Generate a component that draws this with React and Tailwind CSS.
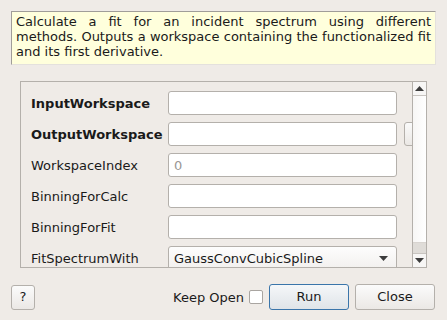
import { useState } from 'react'

const ROWS = [
  { label: 'InputWorkspace', bold: true, value: '' },
  { label: 'OutputWorkspace', bold: true, value: '', browse: true },
  { label: 'WorkspaceIndex', value: '0' },
  { label: 'BinningForCalc', value: '' },
  { label: 'BinningForFit', value: '' },
]

function Field({ row }) {
  return (
    <div className="flex items-center h-[24px]">
      <div className={`w-[137px] shrink-0 pt-[2px] ${row.bold ? 'font-bold' : ''}`}>{row.label}</div>
      <input
        readOnly
        placeholder={row.value}
        className="w-[229px] shrink-0 h-[24px] bg-white border border-[#b4b0ab] rounded-[3px] px-[5px] text-[13px] placeholder:text-[#9a9794] outline-none"
      />
      {row.browse && (
        <div className="ml-[7px] w-[20px] shrink-0 h-[24px] border border-[#b4b0ab] rounded-[3px] bg-gradient-to-b from-[#fafafa] to-[#ebe8e5]" />
      )}
    </div>
  )
}

function Arrow({ down }) {
  return (
    <svg width="9" height="5" viewBox="0 0 9 5">
      <path d={down ? 'M0 0h9L4.5 5z' : 'M0 5h9L4.5 0z'} fill="#3c3c3c" />
    </svg>
  )
}

export default function App() {
  const [keepOpen, setKeepOpen] = useState(false)

  return (
    <div className="w-[447px] h-[320px] bg-[#efebe7] text-[13px] text-[#1a1a1a] overflow-hidden" style={{ fontFamily: '"DejaVu Sans", sans-serif' }}>
      <div className="ml-[11px] mt-[11px] w-[425px] h-[54px] bg-[#ffffdc] border-t border-l border-[#a09d99] border-r border-b border-r-[#e4e1dd] border-b-[#e4e1dd] px-[4px] pt-[2px] leading-[15px] text-justify">
        Calculate a fit for an incident spectrum using different methods. Outputs a workspace containing the functionalized fit and its first derivative.
      </div>

      <div className="ml-[20px] mt-[16px] w-[407px] h-[187px] border border-[#b4b0ab] flex">
        <div className="flex-1 overflow-hidden pl-[10px] pt-[9px] flex flex-col gap-[7px]">
          {ROWS.map((row) => (
            <Field key={row.label} row={row} />
          ))}
          <div className="flex items-center h-[24px]">
            <div className="w-[137px] shrink-0 pt-[2px]">FitSpectrumWith</div>
            <div className="w-[229px] shrink-0 h-[24px] bg-gradient-to-b from-[#fdfdfd] to-[#f2f0ee] border border-[#b4b0ab] rounded-[3px] flex items-center justify-between pl-[5px] pr-[8px]">
              <span className="pt-[1px]">GaussConvCubicSpline</span>
              <Arrow down />
            </div>
          </div>
        </div>
        <div className="w-[14px] border-l border-[#b4b0ab] flex flex-col">
          <div className="h-[14px] flex items-center justify-center border-b border-[#c8c4c0] bg-[#f7f6f5]">
            <Arrow />
          </div>
          <div className="flex-1 bg-gradient-to-r from-[#f7f6f5] to-[#ffffff] border-b border-[#d8d4d0]" />
          <div className="h-[10px] bg-[#dfdcd8]" />
          <div className="h-[14px] flex items-center justify-center border-t border-[#c8c4c0] bg-[#f7f6f5]">
            <Arrow down />
          </div>
        </div>
      </div>

      <div className="flex items-center mt-[16px] pl-[11px] pr-[12px]">
        <button className="w-[24px] h-[25px] border border-[#b4b0ab] rounded-[3px] bg-gradient-to-b from-[#fbfbfb] to-[#ebe8e5] text-[13px]">?</button>
        <div className="flex-1" />
        <span className="pt-[1px]">Keep Open</span>
        <button
          onClick={() => setKeepOpen(!keepOpen)}
          className="ml-[5px] w-[14px] h-[14px] bg-white border border-[#a9a5a1] rounded-[2px]"
        />
        <button className="ml-[6px] w-[80px] h-[26px] border border-[#3a75aa] rounded-[3px] bg-gradient-to-b from-[#f5f7f9] to-[#dfe4e8]">Run</button>
        <button className="ml-[6px] w-[80px] h-[26px] border border-[#b4b0ab] rounded-[3px] bg-gradient-to-b from-[#fbfbfb] to-[#ebe8e5]">Close</button>
      </div>
    </div>
  )
}
